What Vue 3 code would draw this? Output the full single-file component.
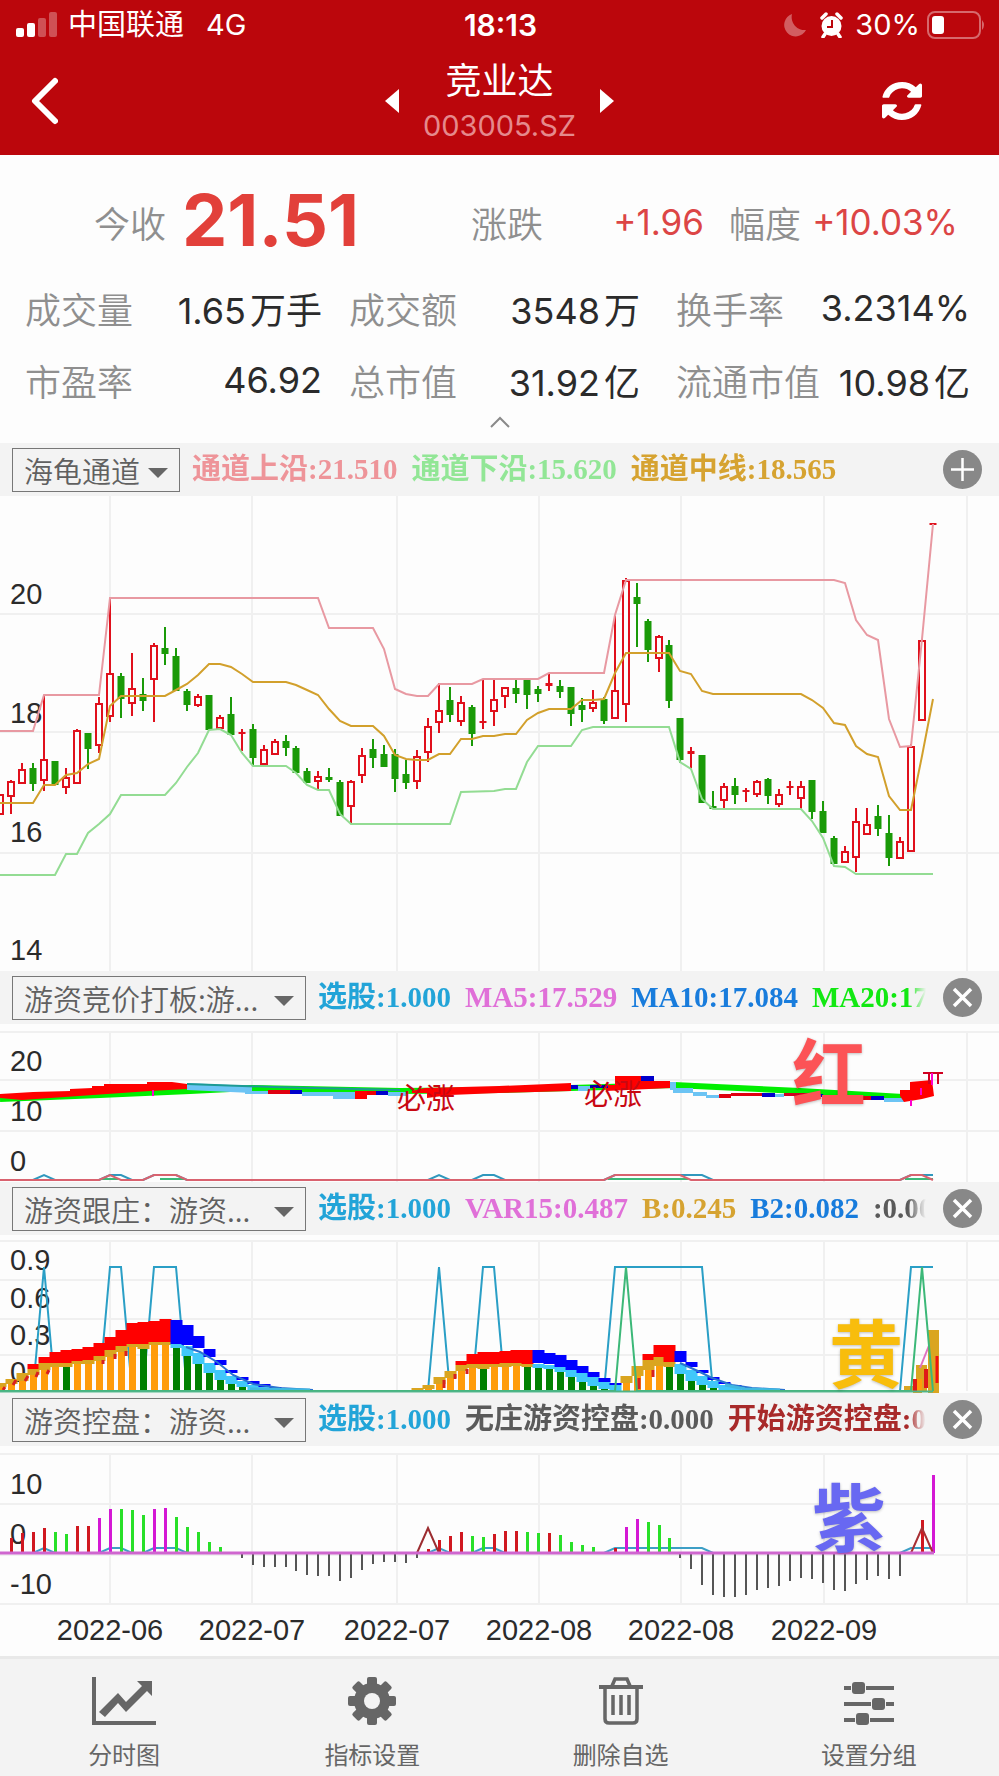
<template>
  <div class="app">
    <header class="header">
      <div class="status-bar">
        <div class="status-left">
          <svg width="42" height="26" viewBox="0 0 42 26" fill="#fff">
            <rect x="0" y="16" width="8" height="9" rx="2" />
            <rect x="11" y="11" width="8" height="14" rx="2" />
            <rect x="22" y="6" width="8" height="19" rx="2" opacity="0.3" />
            <rect x="33" y="0" width="8" height="25" rx="2" opacity="0.3" />
          </svg>
          <span class="carrier">中国联通</span>
          <span class="network">4G</span>
        </div>
        <div class="clock">18:13</div>
        <div class="status-right">
          <svg width="23" height="24" viewBox="0 0 23 24" fill="#fff" opacity="0.35">
            <path d="M8 1a13 13 0 0 0 14 16A11.500 11.500 0 1 1 8 1z" />
          </svg>
          <svg width="25" height="26" viewBox="0 0 25 26">
            <circle cx="12.500" cy="14" r="10" fill="#fff" />
            <path d="M3 6l4-4M22 6l-4-4M6 22l-2 3M19 22l2 3" stroke="#fff" stroke-width="3.500" stroke-linecap="round" />
            <path d="M13 8v7H8" fill="none" stroke="#bb060c" stroke-width="2" />
          </svg>
          <span class="percent">30%</span>
          <svg width="58" height="28" viewBox="0 0 58 28">
            <rect x="1" y="1" width="52" height="26" rx="7" fill="none" stroke="#fff" stroke-width="2" opacity="0.4" />
            <rect x="5" y="5" width="12" height="18" rx="3" fill="#fff" />
            <path d="M55 9q4 5 0 10z" fill="#fff" opacity="0.4" />
          </svg>
        </div>
      </div>
      <div class="nav-bar">
        <button class="icon-btn" aria-label="返回">
          <svg width="28" height="48" viewBox="0 0 28 48">
            <path d="M25 4L5 24L25 44" fill="none" stroke="#fff" stroke-width="6" stroke-linecap="round" stroke-linejoin="round" />
          </svg>
        </button>
        <div class="stock">
          <button class="icon-btn" aria-label="上一只">
            <svg width="14" height="24" viewBox="0 0 14 24" fill="#fff"><path d="M14 0v24L0 12z" /></svg>
          </button>
          <div class="stock-name">
            <h1>竞业达</h1>
            <span>003005.SZ</span>
          </div>
          <button class="icon-btn" aria-label="下一只">
            <svg width="14" height="24" viewBox="0 0 14 24" fill="#fff"><path d="M0 0v24L14 12z" /></svg>
          </button>
        </div>
        <button class="icon-btn refresh" aria-label="刷新">
          <svg width="40" height="38" viewBox="0 0 1536 1536" fill="#fff" preserveAspectRatio="none">
            <path d="M1511 928q0 5-1 7-64 268-268 434.500T764 1536q-146 0-282.500-55T238 1324l-129 129q-19 19-45 19t-45-19-19-45V960q0-26 19-45t45-19h448q26 0 45 19t19 45-19 45l-137 137q71 66 161 102t187 36q134 0 250-65t186-179q11-17 53-117 8-23 30-23h192q13 0 22.500 9.500t9.500 22.500zm25-800v448q0 26-19 45t-45 19h-448q-26 0-45-19t-19-45 19-45l138-138Q969 256 768 256q-134 0-250 65T332 500q-11 17-53 117-8 23-30 23H50q-13 0-22.500-9.500T18 608v-7q65-268 270-434.500T768 0q146 0 284 55.500T1297 212l130-129q19-19 45-19t45 19 19 45z" />
          </svg>
        </button>
      </div>
    </header>

    <section class="quote">
      <div class="quote-main">
        <div class="price-cell">
          <span class="name">今收</span>
          <strong class="price">21.51</strong>
        </div>
        <div class="cell">
          <span class="name">涨跌</span>
          <span class="up">+1.96</span>
        </div>
        <div class="cell">
          <span class="name">幅度</span>
          <span class="up">+10.03%</span>
        </div>
      </div>
      <div class="quote-grid">
        <div v-for="q in quotes" :key="q.name" class="cell">
          <span class="name">{{ q.name }}</span>
          <span class="value">{{ q.value }}<span v-if="q.unit" class="unit">{{ q.unit }}</span></span>
        </div>
      </div>
      <button class="collapse" aria-label="收起">
        <svg width="22" height="13" viewBox="0 0 22 13">
          <path d="M2 11L11 2L20 11" fill="none" stroke="#8a8a8a" stroke-width="2" />
        </svg>
      </button>
    </section>

    <section v-for="p in panels" :key="p.id" class="panel">
      <div class="panel-bar">
        <div class="picker" :class="{ wide: p.id !== 'main' }">
          <select :aria-label="'指标 ' + p.title">
            <option>{{ p.title }}</option>
          </select>
          <svg width="20" height="10" viewBox="0 0 20 10" fill="#666"><path d="M0 0h20L10 10z" /></svg>
        </div>
        <div class="legend">
          <span v-for="l in p.legend" :key="l.text" :class="l.color">{{ l.text }}</span>
        </div>
        <button class="icon-btn" :aria-label="p.id === 'main' ? '添加' : '关闭'">
          <svg width="39" height="39" viewBox="0 0 39 39">
            <circle cx="19.500" cy="19.500" r="19.500" fill="#888" />
            <path v-if="p.id === 'main'" d="M19.500 8v23M8 19.500h23" stroke="#fff" stroke-width="2.500" />
            <path v-else d="M11 11l17 17M28 11l-17 17" stroke="#fff" stroke-width="3.500" />
          </svg>
        </button>
      </div>

      <div class="plot">
        <span v-for="t in p.ticks" :key="t.text" class="tick" :style="{ top: t.y + 'px' }">{{ t.text }}</span>
        <svg class="canvas" :height="p.height" :viewBox="`0 0 999 ${p.height}`" preserveAspectRatio="none">
          <g stroke="#f0f0f0" stroke-width="2">
            <line v-for="y in p.rows" :key="'r' + y" x1="0" x2="999" :y1="y" :y2="y" />
            <line v-for="x in columns" :key="'c' + x" :x1="x" :x2="x" :y1="p.top" :y2="p.bottom" />
          </g>

          <template v-if="p.id === 'main'">
            <template v-for="(c, i) in candles" :key="i">
              <rect :x="px(i) - 1" :y="my(c[1])" width="2" :height="my(c[4]) - my(c[1])" :fill="c[0] ? RED : GREEN" />
              <rect v-if="c[0] && c[3] - c[2] > 9" :x="px(i) - 3" :y="my(c[2]) + 1" width="6" :height="my(c[3]) - my(c[2]) - 1" fill="#fdfdfd" :stroke="RED" stroke-width="2" />
              <rect v-else :x="px(i) - 3.500" :y="my(c[2])" width="7" :height="Math.max(2, my(c[3]) - my(c[2]))" :fill="c[0] ? RED : GREEN" />
            </template>
            <polyline :points="path(upper, my)" fill="none" stroke="#e899a2" stroke-width="2" />
            <polyline :points="path(middle, my)" fill="none" stroke="#d2a02c" stroke-width="2" />
            <polyline :points="path(lower, my)" fill="none" stroke="#93dc93" stroke-width="2" />
          </template>

          <template v-else-if="p.id === 'bid'">
            <polyline points="0,75 100,71 190,67 250,64 400,67 500,66 571,64 674,61 800,67 903,73" fill="none" stroke="#0e0" stroke-width="6" />
            <polygon points="187,59 252,62 252,69 187,66" fill="#6cc4f4" />
            <polyline points="187,60 273,63 400,66" fill="none" stroke="#1c9a94" stroke-width="2" />
            <polygon points="0,70 33,68 70,67 70,65 92,64 92,62 104,62 104,60 125,60 147,60 147,58 172,58 187,60 187,65 150,67 22,76 0,74" fill="#f00" />
            <polygon points="412,67 425,64 499,62 571,59 571,67 499,69 450,71 427,74 427,69 412,69" fill="#f00" />
            <polygon points="606,61 615,61 615,52 641,52 641,57 670,57 670,64 606,67" fill="#f00" />
            <rect v-for="(b, i) in bidBlocks" :key="i" :x="b[0]" :y="b[1]" :width="b[2]" :height="b[3]" :fill="b[4]" />
            <polygon points="900,66 910,66 910,58 932,56 934,72 922,75 904,78 900,72" fill="#f00" />
            <path d="M923 49h20M929 50v10M938 50v10" stroke="#d00020" stroke-width="2" />
            <path d="M932 49v12M911 76v6M921 64v7M153 66v6" stroke="#f0c" stroke-width="2" />
            <polyline :points="pulse(signal, 156, 151)" fill="none" stroke="#3098bd" stroke-width="2" />
            <path d="M101 155h17M160 155h24M608 155h80M905 155h28" stroke="#3cb878" stroke-width="2" />
            <polyline :points="pulse(redSignal, 156, 151)" fill="none" stroke="#d9626f" stroke-width="2" />
          </template>

          <template v-else-if="p.id === 'follow'">
            <polyline :points="pulse(signal, 156, 32)" fill="none" stroke="#2a9fc6" stroke-width="2" />
            <template v-for="b in humps" :key="b[0]">
              <rect v-if="b[2]" :x="px(b[0]) - 5.500" :y="fy(b[2])" width="12" :height="fy(b[3]) - fy(b[2])" :fill="b[1] < 2 ? '#f00' : '#00f'" />
              <rect :x="px(b[0]) - 5.500" :y="fy(b[4])" width="12" :height="fy(b[5]) - fy(b[4])" :fill="b[1] < 2 ? '#daa520' : '#40c8fa'" />
              <rect :x="px(b[0]) - 3" :y="fy(b[5])" width="7" :height="156 - fy(b[5])" :fill="b[1] === 0 ? '#ff9c0a' : '#008000'" />
            </template>
            <path d="M5 152l-2 3M16 145l-3 5M28 141l-3 5M38 137l-2 5M49 135l-2 4M103 125v4M115 119v5M126 116v5M444 145v8M455 139v5M467 134v5M639 143v11M653 135v7" stroke="#d82020" stroke-width="3" />
            <path d="M186 112L200 117L217 127L233 140L253 149L280 153L313 155M680 128L700 137L712 143L732 150L752 153L785 155" fill="none" stroke="#2a72d0" stroke-width="2" />
            <path d="M250 154L310 155M725 150L745 154L780 155" fill="none" stroke="#40b8e0" stroke-width="3" />
            <rect x="904" y="151" width="10" height="6" fill="#daa520" />
            <rect x="916" y="130" width="11" height="26" fill="#daa520" />
            <rect x="913" y="144" width="9" height="14" fill="#ff9c0a" />
            <path d="M915 144v13M926 134v19M937 120v27" stroke="#e01818" stroke-width="4" />
            <path d="M920 133L930 108" stroke="#e070c0" stroke-width="2" />
            <rect x="928" y="95" width="11" height="63" fill="#daa520" />
            <path d="M937 121v27" stroke="#f01010" stroke-width="3" />
            <polyline :points="pulse([57, 84], 156, 32)" fill="none" stroke="#3cb878" stroke-width="2" />
            <path d="M0 156.500h933" stroke="#4fb488" stroke-width="2" />
          </template>

          <template v-else>
            <polyline :points="pulse(signal, 107, 102)" fill="none" stroke="#3d9fc6" stroke-width="2" />
            <rect v-for="b in control" :key="b[0]" :x="px(b[0]) - 1" :y="Math.min(107, cy(b[1]))" :width="b[1] < 470 ? 3 : 2" :height="Math.abs(cy(b[1]) - 107)" :fill="b[2]" />
            <polyline :points="`${px(38)},107 ${px(39)},82 ${px(40)},107`" fill="none" stroke="#9c2c30" stroke-width="2" />
            <polyline :points="`${px(83)},107 922,82 ${px(85)},107`" fill="none" stroke="#a83034" stroke-width="2" />
            <path d="M0 107h934" stroke="#cf66cf" stroke-width="3" />
          </template>
        </svg>
        <span v-for="m in p.marks" :key="m.x" class="mark" :class="m.kind" :style="{ left: (m.x / 999) * 100 + '%', top: m.y + 'px' }">{{ m.text }}</span>
      </div>
    </section>

    <div class="dates">
      <span v-for="(d, i) in dates" :key="i" class="date" :style="{ left: (columns[i] / 999) * 100 + '%' }">{{ d }}</span>
    </div>

    <nav class="toolbar">
      <button class="tool">
        <svg width="64" height="48" viewBox="0 0 64 48" fill="#666">
          <path d="M0 0h4v44h60v4H0z" />
          <path d="M7 35L26 16L34 25L50 9L45 4H60V19L55 14L34 35L26 26L13 40z" />
        </svg>
        <span>分时图</span>
      </button>
      <button class="tool">
        <svg width="48" height="48" viewBox="0 0 48 48">
          <g fill="#666">
            <rect v-for="a in [0, 45, 90, 135]" :key="a" x="19" y="0" width="10" height="48" rx="2" :transform="`rotate(${a} 24 24)`" />
            <circle cx="24" cy="24" r="18" />
          </g>
          <circle cx="24" cy="24" r="8" fill="#f3f3f3" />
        </svg>
        <span>指标设置</span>
      </button>
      <button class="tool">
        <svg width="44" height="48" viewBox="0 0 44 48" fill="none" stroke="#666">
          <path d="M0 10h44" stroke-width="4" />
          <path d="M13 9l3-7h12l3 7M6 11v31q0 4 4 4h24q4 0 4-4V11" stroke-width="3.500" />
          <path d="M14 18v20M22 18v20M30 18v20" stroke-width="3.500" />
        </svg>
        <span>删除自选</span>
      </button>
      <button class="tool">
        <svg width="50" height="48" viewBox="0 0 50 48" fill="#666">
          <path d="M0 9h7v4H0zM22 9h28v4H22zM0 25h27v4H0zM42 25h8v4h-8zM0 41h11v4H0zM26 41h24v4H26z" />
          <rect x="8" y="5" width="13" height="12" rx="3" />
          <rect x="28" y="21" width="13" height="12" rx="3" />
          <rect x="12" y="36" width="13" height="12" rx="3" />
        </svg>
        <span>设置分组</span>
      </button>
    </nav>
  </div>
</template>

<script setup>
const RED = '#e0101c';
const GREEN = '#1a9a08';

const quotes = [
  { name: '成交量', value: '1.65', unit: '万手' },
  { name: '成交额', value: '3548', unit: '万' },
  { name: '换手率', value: '3.2314%' },
  { name: '市盈率', value: '46.92' },
  { name: '总市值', value: '31.92', unit: '亿' },
  { name: '流通市值', value: '10.98', unit: '亿' },
];

const dates = ['2022-06', '2022-07', '2022-07', '2022-08', '2022-08', '2022-09'];
const columns = [110, 252, 397, 539, 681, 824, 967];

const panels = [
  {
    id: 'main',
    title: '海龟通道',
    height: 475,
    top: 0,
    bottom: 475,
    rows: [118, 236, 357],
    ticks: [{ text: '20', y: 98 }, { text: '18', y: 217 }, { text: '16', y: 336 }, { text: '14', y: 454 }],
    legend: [
      { text: '通道上沿:21.510', color: 'pink' },
      { text: '通道下沿:15.620', color: 'mint' },
      { text: '通道中线:18.565', color: 'gold' },
    ],
  },
  {
    id: 'bid',
    title: '游资竞价打板:游...',
    height: 158,
    top: 8,
    bottom: 158,
    rows: [8, 56, 107],
    ticks: [{ text: '20', y: 37 }, { text: '10', y: 87 }, { text: '0', y: 137 }],
    legend: [
      { text: '选股:1.000', color: 'sky' },
      { text: 'MA5:17.529', color: 'orchid' },
      { text: 'MA10:17.084', color: 'blue' },
      { text: 'MA20:17.250', color: 'lime' },
    ],
    marks: [
      { text: '必涨', x: 426, y: 72, kind: 'small' },
      { text: '必涨', x: 613, y: 68, kind: 'small' },
      { text: '红', x: 829, y: 45, kind: 'red' },
    ],
  },
  {
    id: 'follow',
    title: '游资跟庄：游资...',
    height: 158,
    top: 6,
    bottom: 156,
    rows: [6, 45, 84, 120],
    ticks: [{ text: '0.9', y: 25 }, { text: '0.6', y: 63 }, { text: '0.3', y: 100 }, { text: '0', y: 137 }],
    legend: [
      { text: '选股:1.000', color: 'sky' },
      { text: 'VAR15:0.487', color: 'orchid' },
      { text: 'B:0.245', color: 'gold' },
      { text: 'B2:0.082', color: 'blue' },
      { text: ':0.000', color: 'gray' },
    ],
    marks: [{ text: '黄', x: 866, y: 115, kind: 'yellow' }],
  },
  {
    id: 'control',
    title: '游资控盘：游资...',
    height: 160,
    top: 8,
    bottom: 158,
    rows: [8, 58, 109, 158],
    ticks: [{ text: '10', y: 38 }, { text: '0', y: 88 }, { text: '-10', y: 138 }],
    legend: [
      { text: '选股:1.000', color: 'sky' },
      { text: '无庄游资控盘:0.000', color: 'gray' },
      { text: '开始游资控盘:0.000', color: 'brown' },
    ],
    marks: [{ text: '紫', x: 849, y: 68, kind: 'purple' }],
  },
];

// x of a trading day, y of a chart unit in each panel
const px = (i) => Math.round(i * 10.97 + 0.3);
const my = (v) => Math.round(v / 2.8 - 61);
const fy = (v) => Math.round(v / 3 - 65);
const cy = (v) => Math.round(v / 3 - 51);

const path = (points, scale) => points.map(([i, v]) => `${px(i)},${scale(v)}`).join(' ');

const pulse = (days, low, high) => {
  const points = [];
  for (let i = 0; i < 86; i++) points.push(`${px(i)},${days.includes(i) ? high : low}`);
  return points.join(' ');
};

const signal = [4, 10, 11, 14, 15, 16, 40, 44, 45, 56, 57, 58, 59, 60, 61, 62, 63, 64, 83, 84, 85];
const redSignal = [10, 14, 15, 16, 56, 57, 58, 59, 60, 61, 62, 83, 84];

// rising, high, body top, body bottom, low
const candles = [
  [1, 1005, 1005, 1062, 1062], [1, 965, 968, 1012, 1060], [1, 918, 935, 973, 973], [0, 918, 933, 976, 997],
  [1, 728, 908, 965, 997], [0, 912, 912, 980, 980], [1, 932, 958, 986, 1006], [1, 823, 825, 975, 975],
  [0, 835, 835, 878, 934], [1, 733, 750, 868, 890], [1, 457, 667, 787, 803], [0, 667, 674, 740, 792],
  [1, 610, 708, 751, 786], [0, 681, 726, 744, 773], [1, 582, 587, 682, 804], [0, 538, 595, 613, 645],
  [0, 597, 619, 718, 718], [0, 711, 716, 755, 773], [1, 725, 730, 755, 762], [0, 729, 729, 825, 825],
  [1, 785, 790, 821, 821], [0, 733, 782, 840, 840], [1, 823, 832, 838, 885], [0, 808, 823, 903, 928],
  [1, 868, 880, 921, 921], [1, 852, 857, 893, 893], [0, 841, 857, 875, 899], [0, 872, 876, 946, 946],
  [0, 931, 940, 975, 975], [1, 942, 956, 970, 991], [0, 933, 958, 965, 972], [0, 967, 972, 1066, 1066],
  [1, 965, 970, 1039, 1086], [1, 877, 895, 953, 973], [0, 850, 878, 904, 932], [0, 867, 894, 930, 930],
  [0, 880, 893, 962, 1000], [0, 909, 949, 973, 991], [1, 883, 900, 970, 991], [1, 792, 814, 887, 916],
  [1, 695, 770, 804, 833], [0, 706, 741, 784, 803], [1, 730, 748, 802, 814], [0, 756, 762, 837, 871],
  [1, 685, 801, 807, 822], [1, 682, 738, 774, 814], [1, 705, 705, 731, 763], [0, 686, 707, 724, 750],
  [0, 687, 687, 727, 768], [0, 704, 712, 724, 747], [1, 670, 694, 702, 717], [0, 685, 704, 719, 736],
  [0, 706, 706, 782, 816], [0, 736, 756, 771, 803], [1, 715, 747, 763, 775], [0, 733, 740, 800, 810],
  [1, 507, 713, 792, 792], [1, 400, 405, 752, 803], [0, 415, 454, 472, 593], [0, 515, 521, 601, 635],
  [1, 560, 563, 624, 663], [0, 574, 587, 744, 763], [0, 791, 791, 911, 918], [1, 873, 884, 893, 932],
  [0, 895, 895, 1029, 1029], [0, 996, 1040, 1047, 1047], [1, 973, 984, 1022, 1046], [0, 960, 984, 1008, 1032],
  [1, 988, 995, 1000, 1027], [1, 966, 969, 1006, 1013], [0, 959, 962, 1011, 1033], [1, 991, 1006, 1032, 1041],
  [1, 968, 982, 986, 1008], [1, 968, 984, 1017, 1046], [0, 965, 965, 1056, 1075], [0, 1025, 1052, 1114, 1114],
  [0, 1122, 1129, 1202, 1202], [1, 1150, 1166, 1196, 1196], [1, 1045, 1081, 1181, 1224], [1, 1045, 1089, 1118, 1118],
  [0, 1036, 1067, 1103, 1122], [0, 1063, 1113, 1184, 1207], [1, 1126, 1138, 1184, 1184], [1, 866, 870, 1164, 1164],
  [1, 570, 573, 798, 800], [1, 247, 247, 250, 250],
];

const upper = [
  [0, 829], [3, 829], [4, 728], [9, 728], [10, 457], [29, 457], [30, 540], [34, 540], [35, 600], [36, 712],
  [37, 725], [38, 731], [39, 732], [40, 697], [43, 697], [44, 683], [49, 683], [50, 666], [55, 666], [56, 505],
  [57, 405], [76, 405], [77, 415], [78, 518], [79, 560], [80, 573], [81, 795], [82, 873], [83, 871], [84, 570], [85, 248],
];
const middle = [
  [0, 1030], [3, 1030], [4, 981], [5, 980], [6, 952], [7, 947], [8, 920], [9, 906], [10, 760], [11, 732], [15, 732],
  [16, 715], [17, 697], [18, 672], [19, 640], [20, 640], [21, 650], [22, 670], [23, 692], [26, 692], [27, 700],
  [28, 714], [29, 727], [30, 768], [31, 801], [32, 814], [34, 814], [35, 843], [36, 897], [37, 907], [38, 910],
  [39, 910], [40, 893], [41, 892], [42, 850], [43, 850], [44, 843], [45, 842], [46, 837], [47, 836], [48, 798],
  [49, 777], [50, 768], [52, 768], [53, 743], [54, 742], [55, 740], [56, 665], [57, 610], [61, 610], [62, 660],
  [63, 670], [64, 716], [65, 726], [73, 726], [74, 742], [75, 763], [76, 805], [77, 813], [78, 870], [79, 893],
  [80, 902], [81, 1012], [82, 1051], [83, 1051], [84, 900], [85, 740],
];
const lower = [
  [0, 1232], [5, 1232], [6, 1173], [7, 1172], [8, 1114], [9, 1088], [10, 1060], [11, 1007], [15, 1007], [16, 974],
  [17, 930], [18, 890], [19, 825], [20, 823], [21, 840], [22, 890], [23, 928], [26, 928], [27, 945], [28, 980],
  [29, 995], [30, 995], [31, 1060], [32, 1088], [41, 1088], [42, 1000], [45, 998], [46, 991], [47, 990], [48, 915],
  [49, 871], [52, 871], [53, 825], [54, 817], [61, 817], [62, 915], [63, 935], [64, 1020], [65, 1048], [73, 1048],
  [74, 1080], [75, 1128], [76, 1207], [77, 1209], [78, 1228], [85, 1228],
];

const bidBlocks = [
  [245, 67, 23, 3, '#6cc4f4'], [268, 66, 22, 4, '#e00010'], [290, 66, 12, 4, '#00c'], [302, 68, 53, 4, '#6cc4f4'],
  [333, 71, 22, 4, '#6cc4f4'], [355, 67, 12, 8, '#f00'], [367, 67, 9, 4, '#e00'], [376, 67, 12, 4, '#00c'],
  [388, 68, 18, 4, '#6cc4f4'], [571, 61, 7, 4, '#00c'], [578, 62, 12, 5, '#6cc4f4'], [590, 61, 18, 3, '#00a'],
  [641, 52, 13, 5, '#00c'], [670, 58, 6, 8, '#6cc4f4'], [673, 64, 20, 5, '#6cc4f4'], [693, 68, 14, 4, '#6cc4f4'],
  [706, 71, 13, 3, '#6cc4f4'], [719, 70, 12, 4, '#e00010'], [731, 69, 31, 3, '#e00010'], [762, 69, 13, 4, '#00c'],
  [775, 70, 9, 3, '#6cc4f4'], [784, 69, 27, 3, '#d00020'], [811, 70, 12, 3, '#00c'], [823, 71, 14, 3, '#3a9ad0'],
  [860, 72, 11, 4, '#e00010'], [871, 72, 13, 4, '#00c'], [884, 74, 20, 4, '#6cc4f4'],
];

// day, kind (0 orange, 1 green under gold, 2 falling), outer top/bottom, cap top, bar top
const humps = [
  [0, 0, 0, 0, 640, 652], [1, 0, 0, 0, 627, 643], [2, 0, 0, 0, 608, 632], [3, 0, 582, 597, 597, 615],
  [4, 0, 560, 580, 580, 600], [5, 0, 547, 580, 580, 590], [6, 1, 541, 578, 578, 590], [7, 0, 537, 574, 574, 583],
  [8, 0, 532, 570, 570, 583], [9, 0, 520, 557, 557, 572], [10, 0, 502, 540, 540, 560], [11, 0, 480, 527, 527, 545],
  [12, 0, 460, 522, 522, 530], [13, 1, 455, 522, 522, 536], [14, 0, 452, 516, 516, 526], [15, 0, 448, 516, 516, 526],
  [16, 2, 450, 522, 522, 535], [17, 2, 466, 525, 527, 558], [18, 2, 497, 535, 548, 583], [19, 2, 536, 560, 578, 610],
  [20, 2, 571, 584, 600, 630], [21, 2, 600, 609, 617, 643], [22, 2, 620, 630, 632, 652], [23, 2, 632, 642, 645, 660],
  [24, 2, 643, 650, 652, 662], [25, 2, 650, 655, 656, 663],
  [38, 0, 0, 0, 655, 663], [39, 0, 0, 0, 644, 658], [40, 0, 0, 0, 620, 642], [41, 0, 0, 0, 603, 625],
  [42, 0, 572, 585, 585, 602], [43, 0, 553, 583, 583, 595], [44, 1, 546, 583, 583, 597], [45, 0, 546, 583, 583, 592],
  [46, 0, 543, 580, 580, 590], [47, 0, 541, 580, 580, 588], [48, 1, 539, 583, 583, 590], [49, 2, 541, 580, 583, 594],
  [50, 2, 548, 583, 585, 598], [51, 2, 556, 592, 592, 606], [52, 2, 569, 600, 600, 620], [53, 2, 588, 608, 608, 637],
  [54, 2, 607, 620, 620, 648], [55, 2, 625, 635, 637, 657], [56, 2, 638, 645, 645, 662],
  [57, 0, 0, 0, 618, 640], [58, 0, 0, 0, 587, 617], [59, 0, 553, 570, 570, 600], [60, 0, 526, 562, 562, 588],
  [61, 1, 524, 577, 577, 590], [62, 2, 544, 577, 582, 612], [63, 2, 577, 590, 600, 634], [64, 2, 600, 610, 617, 646],
  [65, 2, 622, 631, 632, 655], [66, 2, 636, 643, 645, 660], [67, 2, 645, 650, 652, 663],
];

const R = '#d01820';
const G = '#28e028';
const M = '#d418d4';
const K = '#555';
const control = [
  [1, 430, R], [2, 414, R], [3, 412, R], [4, 400, R], [5, 410, G], [6, 417, G], [7, 392, R], [8, 392, R], [9, 369, M],
  [10, 342, M], [11, 343, G], [12, 345, G], [13, 359, G], [14, 341, M], [15, 340, M], [16, 366, G], [17, 395, G],
  [18, 411, G], [19, 442, G], [20, 457, G], [22, 488, K], [23, 509, K], [24, 516, K], [25, 515, K], [26, 515, K],
  [27, 529, K], [28, 541, K], [29, 543, K], [30, 543, K], [31, 559, K], [32, 550, K], [33, 525, K], [34, 507, K],
  [35, 500, K], [36, 500, K], [37, 503, K], [38, 488, K], [39, 462, R], [40, 436, R], [41, 423, R], [42, 411, R],
  [43, 422, G], [44, 426, G], [45, 417, R], [46, 407, R], [47, 407, R], [48, 410, G], [49, 414, G], [50, 414, R],
  [51, 420, G], [52, 440, G], [53, 451, G], [54, 455, G], [56, 460, R], [57, 395, M], [58, 371, M], [59, 382, G],
  [60, 390, G], [61, 430, G], [62, 490, K], [63, 523, K], [64, 569, K], [65, 600, K], [66, 605, K], [67, 605, K],
  [68, 600, K], [69, 585, K], [70, 580, K], [71, 572, K], [72, 558, K], [73, 548, K], [74, 551, K], [75, 563, K],
  [76, 584, K], [77, 587, K], [78, 567, K], [79, 554, K], [80, 543, K], [81, 551, K], [82, 544, K], [84, 374, R],
  [85, 240, M],
];
</script>

<style>
body {
  margin: 0;
  background: #fdfdfd;
}
</style>

<style scoped>
.app {
  font-family: Inter, 'Noto Sans CJK SC', sans-serif;
  color: #2b2b2b;
  background: #fdfdfd;
  overflow: hidden;
}

svg {
  display: block;
  flex-shrink: 0;
}

button {
  border: 0;
  padding: 0;
  background: none;
  font: inherit;
  color: inherit;
}

.icon-btn {
  display: flex;
  flex-shrink: 0;
}

/* Header */
.header {
  height: 155px;
  background: #bb060c;
  color: #fff;
}

.status-bar {
  display: grid;
  grid-template-columns: 1fr auto 1fr;
  align-items: center;
  height: 50px;
  padding: 0 14px 0 16px;
  font-size: 29px;
  line-height: 36px;
}

.status-left,
.status-right {
  display: flex;
  align-items: center;
}

.status-right {
  justify-content: flex-end;
}

.carrier {
  margin: 0 22px 0 10px;
}

.clock {
  font-size: 30px;
  font-weight: 600;
}

.status-right svg:nth-child(2) {
  margin: 0 11px 0 12px;
}

.percent {
  margin-right: 7px;
}

.nav-bar {
  display: grid;
  grid-template-columns: 1fr auto 1fr;
  align-items: center;
  height: 102px;
  padding: 0 77px 0 30px;
}

.stock {
  display: flex;
  align-items: center;
  gap: 24px;
  margin-left: 47px;
}

.stock-name {
  display: flex;
  flex-direction: column;
  align-items: center;
}

.stock-name h1 {
  margin: 0;
  font-size: 36px;
  line-height: 50px;
  font-weight: 400;
}

.stock-name span {
  font-size: 29px;
  line-height: 40px;
  color: #e5898c;
}

.refresh {
  justify-self: end;
}

/* Quote */
.quote {
  padding-top: 17px;
  font-size: 36px;
}

.quote-main {
  display: grid;
  grid-template-columns: 352fr 233fr 229fr;
  column-gap: 25px;
  height: 100px;
  padding: 0 41px 0 94px;
}

.price-cell,
.cell {
  display: flex;
  align-items: center;
  white-space: nowrap;
}

.cell {
  justify-content: space-between;
}

.price-cell {
  gap: 16px;
}

.name {
  font-size: 36px;
  font-weight: 350;
  color: #8f8f8f;
}

.price {
  padding-bottom: 4px;
  font-size: 72px;
  font-weight: 700;
  line-height: 96px;
  color: #e2403a;
}

.up {
  font-size: 35px;
  color: #dc4545;
}

.quote-grid {
  display: grid;
  grid-template-columns: 297fr 291fr 303fr;
  column-gap: 27px;
  grid-auto-rows: 72px;
  padding: 0 29px 0 25px;
}

.quote-grid .cell:nth-child(3n) {
  padding-left: 9px;
}

.unit {
  margin-left: 4px;
}

.collapse {
  display: flex;
  justify-content: center;
  width: 100%;
  height: 27px;
}

/* Indicator panels */
.panel-bar {
  display: flex;
  align-items: center;
  height: 53px;
  padding: 0 17px 0 12px;
  box-sizing: border-box;
  background: #f3f3f3;
}

.picker {
  position: relative;
  flex-shrink: 0;
  width: 168px;
}

.picker.wide {
  width: 294px;
}

.picker select {
  display: block;
  width: 100%;
  height: 44px;
  padding: 0 0 2px 11px;
  border: 1px solid #777;
  border-radius: 0;
  appearance: none;
  background: transparent;
  font-family: 'Noto Sans CJK SC', sans-serif;
  font-size: 29px;
  font-weight: 350;
  color: #606060;
}

.picker svg {
  position: absolute;
  right: 12px;
  top: 20px;
  pointer-events: none;
}

.legend {
  display: flex;
  flex: 1;
  gap: 14px;
  min-width: 0;
  margin: 0 17px 0 12px;
  padding-bottom: 2px;
  overflow: hidden;
  white-space: nowrap;
  font-family: 'Liberation Serif', 'Noto Sans CJK SC', serif;
  font-size: 29px;
  line-height: 44px;
  font-weight: 700;
  -webkit-mask-image: linear-gradient(90deg, #000 calc(100% - 18px), transparent);
  mask-image: linear-gradient(90deg, #000 calc(100% - 18px), transparent);
}

.pink { color: #ee9499; }
.mint { color: #92e696; }
.gold { color: #d6a331; }
.sky { color: #22a4d8; }
.orchid { color: #e070d8; }
.blue { color: #187cdc; }
.lime { color: #12e812; }
.gray { color: #5a5a5a; }
.brown { color: #a82a2a; }

.plot {
  position: relative;
}

.canvas {
  position: relative;
  width: 100%;
}

.tick {
  position: absolute;
  left: 10px;
  transform: translateY(-50%);
  font-family: 'Liberation Sans', sans-serif;
  font-size: 29px;
  line-height: 34px;
}

.mark {
  position: absolute;
  transform: translate(-50%, -50%);
  font-family: 'Noto Sans CJK SC', sans-serif;
  font-size: 74px;
  line-height: 80px;
  font-weight: 700;
  text-shadow: 0 1px 3px rgba(0, 0, 0, 0.25);
  white-space: nowrap;
}

.mark.small {
  font-size: 29px;
  line-height: 32px;
  font-weight: 400;
  color: #c80812;
  text-shadow: none;
}

.mark.red { color: #fc5356; }
.mark.yellow { color: #f8bd0c; }
.mark.purple { color: #6868f2; }

.dates {
  position: relative;
  height: 50px;
}

.date {
  position: absolute;
  top: 7px;
  transform: translateX(-50%);
  font-family: 'Liberation Sans', sans-serif;
  font-size: 29px;
  line-height: 34px;
}

/* Toolbar */
.toolbar {
  display: grid;
  grid-template-columns: repeat(4, 1fr);
  padding: 15px 6px 2px 0;
  border-top: 3px solid #e9e9e9;
  background: #f3f3f3;
}

.tool {
  display: flex;
  flex-direction: column;
  align-items: center;
  gap: 13px;
  padding-top: 3px;
  color: #666;
  font-size: 24px;
  line-height: 36px;
}
</style>
